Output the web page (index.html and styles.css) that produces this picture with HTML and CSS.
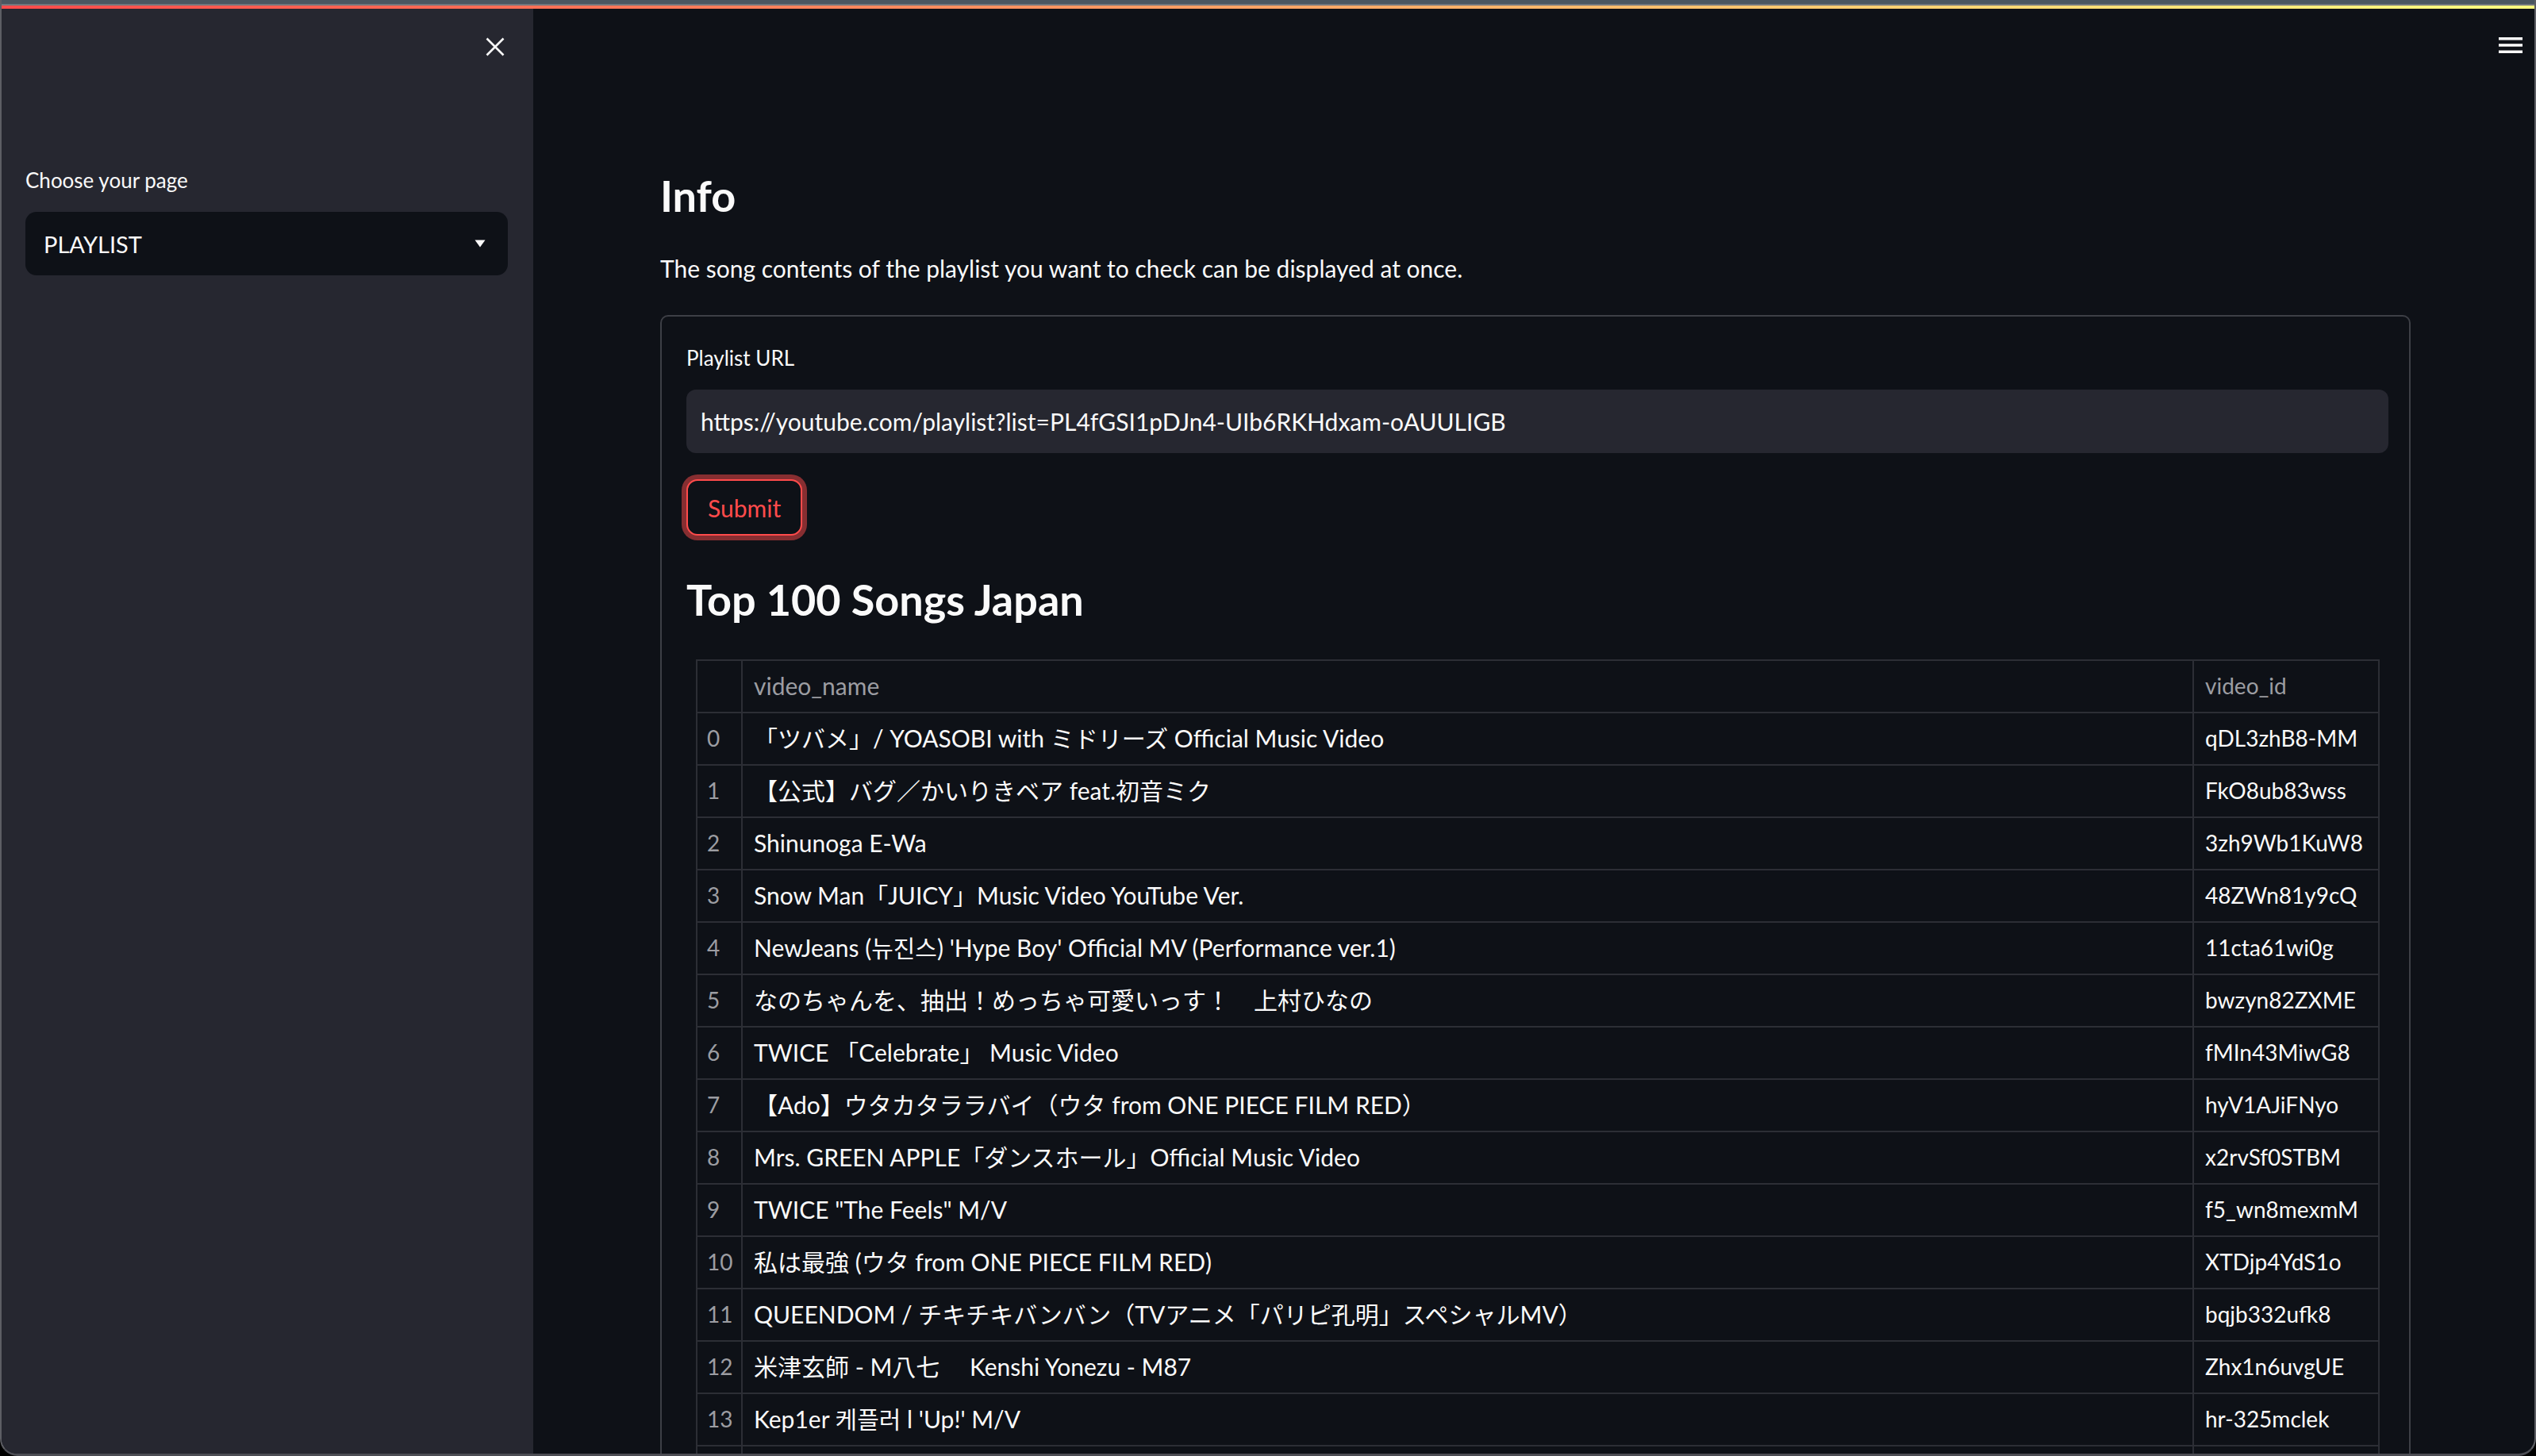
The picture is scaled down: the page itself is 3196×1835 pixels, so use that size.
FILE: index.html
```html
<!DOCTYPE html>
<html lang="en">
<head>
<meta charset="utf-8">
<title>Playlist</title>
<link rel="stylesheet" href="styles.css">
</head>
<body>
<div class="window">
  <div class="titlebar"></div>
  <div class="decoration"></div>
  <div class="app">
    <aside class="sidebar">
      <div class="sidebar-top">
        <button class="close-btn" aria-label="Close sidebar">
          <svg width="24" height="24" viewBox="0 0 24 24"><path d="M1.5 1.5 L22.5 22.5 M22.5 1.5 L1.5 22.5" stroke="#fafafa" stroke-width="2.6" fill="none"/></svg>
        </button>
      </div>
      <div class="side-label">Choose your page</div>
      <div class="select">
        <span>PLAYLIST</span>
        <svg class="caret" width="14" height="10" viewBox="0 0 14 10"><path d="M0.5 0.5 H13.5 L7 9.5 Z" fill="#fafafa"/></svg>
      </div>
    </aside>
    <main class="main">
      <div class="toolbar">
        <svg width="30" height="20" viewBox="0 0 30 20"><rect x="0" y="0" width="30" height="3.5" fill="#fafafa"/><rect x="0" y="8.2" width="30" height="3.5" fill="#fafafa"/><rect x="0" y="16.5" width="30" height="3.5" fill="#fafafa"/></svg>
      </div>
      <div class="block">
        <h3 class="title">Info</h3>
        <p class="lead">The song contents of the playlist you want to check can be displayed at once.</p>
        <div class="card">
          <div class="field-label">Playlist URL</div>
          <div class="input">https://youtube.com/playlist?list=PL4fGSI1pDJn4-UIb6RKHdxam-oAUULIGB</div>
          <button class="submit">Submit</button>
          <h3 class="title sub">Top 100 Songs Japan</h3>
          <table class="df">
            <colgroup><col class="c-idx"><col class="c-name"><col class="c-id"></colgroup>
            <thead>
              <tr><th></th><th>video_name</th><th class="id">video_id</th></tr>
            </thead>
            <tbody>
              <tr><th>0</th><td>「ツバメ」/ YOASOBI with ミドリーズ Official Music Video</td><td class="id">qDL3zhB8-MM</td></tr>
              <tr><th>1</th><td>【公式】バグ／かいりきベア feat.初音ミク</td><td class="id">FkO8ub83wss</td></tr>
              <tr><th>2</th><td>Shinunoga E-Wa</td><td class="id">3zh9Wb1KuW8</td></tr>
              <tr><th>3</th><td>Snow Man「JUICY」Music Video YouTube Ver.</td><td class="id">48ZWn81y9cQ</td></tr>
              <tr><th>4</th><td>NewJeans (뉴진스) 'Hype Boy' Official MV (Performance ver.1)</td><td class="id">11cta61wi0g</td></tr>
              <tr><th>5</th><td>なのちゃんを、抽出！めっちゃ可愛いっす！　上村ひなの</td><td class="id">bwzyn82ZXME</td></tr>
              <tr><th>6</th><td>TWICE 「Celebrate」 Music Video</td><td class="id">fMIn43MiwG8</td></tr>
              <tr><th>7</th><td>【Ado】ウタカタララバイ（ウタ from ONE PIECE FILM RED）</td><td class="id">hyV1AJiFNyo</td></tr>
              <tr><th>8</th><td>Mrs. GREEN APPLE「ダンスホール」Official Music Video</td><td class="id">x2rvSf0STBM</td></tr>
              <tr><th>9</th><td>TWICE "The Feels" M/V</td><td class="id">f5_wn8mexmM</td></tr>
              <tr><th>10</th><td>私は最強 (ウタ from ONE PIECE FILM RED)</td><td class="id">XTDjp4YdS1o</td></tr>
              <tr><th>11</th><td>QUEENDOM / チキチキバンバン（TVアニメ「パリピ孔明」スペシャルMV）</td><td class="id">bqjb332ufk8</td></tr>
              <tr><th>12</th><td>米津玄師 - M八七　 Kenshi Yonezu - M87</td><td class="id">Zhx1n6uvgUE</td></tr>
              <tr><th>13</th><td>Kep1er 케플러 l 'Up!' M/V</td><td class="id">hr-325mclek</td></tr>
              <tr><th></th><td></td><td class="id"></td></tr>
            </tbody>
          </table>
        </div>
      </div>
    </main>
  </div>
</div>
</body>
</html>
```

FILE: styles.css
```css
* { box-sizing: border-box; }

html, body {
  margin: 0;
  padding: 0;
  background: #000;
}

body {
  font-family: Lato, "Noto Sans CJK JP", "Noto Sans CJK KR", sans-serif;
  color: #fafafa;
}

.window {
  width: 3196px;
  height: 1835px;
  overflow: hidden;
  background: #0e1117;
  border-left: 2px solid #5d5e64;
  border-right: 2px solid #5d5e64;
  border-bottom: 3px solid #4c4d54;
  border-radius: 0 0 22px 22px;
  display: flex;
  flex-direction: column;
}

.titlebar {
  height: 7px;
  flex: none;
  background: #4a5660;
  border-bottom: 2px solid #72787e;
}

.decoration {
  height: 4px;
  flex: none;
  background: linear-gradient(90deg, #ff4b4b, #fffd80);
}

.app {
  flex: 1;
  display: flex;
  min-height: 0;
}

/* Sidebar */
.sidebar {
  width: 670px;
  flex: none;
  background: #262730;
  padding: 0 32px 0 30px;
}

.sidebar-top {
  display: flex;
  justify-content: flex-end;
  padding-top: 36px;
  padding-right: 4px;
}

.close-btn {
  width: 24px;
  height: 24px;
  padding: 0;
  border: 0;
  background: transparent;
  display: block;
}

.close-btn svg { display: block; }

.side-label {
  margin-top: 136px;
  font-size: 26px;
  line-height: 40px;
  color: #fafafa;
}

.select {
  margin-top: 20px;
  height: 80px;
  background: #0e1117;
  border-radius: 14px;
  padding: 0 28px 0 23px;
  display: flex;
  align-items: center;
  justify-content: space-between;
  font-size: 29px;
}

.caret { display: block; }

/* Main */
.main {
  flex: 1;
  position: relative;
  padding: 0 156px 0 160px;
  min-width: 0;
}

.toolbar {
  position: absolute;
  top: 36px;
  right: 15px;
}

.toolbar svg { display: block; }

.block {
  padding-top: 203px;
}

.title {
  margin: 0;
  font-size: 54px;
  line-height: 66px;
  font-weight: 700;
  color: #fafafa;
}

.lead {
  margin: 34px 0 0;
  font-size: 30px;
  line-height: 48px;
}

.card {
  margin-top: 35px;
  border: 2px solid #3d3f46;
  border-radius: 10px;
  padding: 32px 26px 0 31px;
  height: 1600px;
}

.field-label {
  font-size: 26px;
  line-height: 40px;
}

.input {
  margin-top: 20px;
  height: 80px;
  background: #262730;
  border-radius: 12px;
  padding: 0 18px;
  display: flex;
  align-items: center;
  font-size: 30px;
}

.submit {
  display: block;
  margin-top: 33px;
  height: 71px;
  padding: 0 25px;
  background: #0e1117;
  color: #ff4b4b;
  border: 2px solid #ff4b4b;
  border-radius: 14px;
  box-shadow: 0 0 0 6px rgba(255, 75, 75, 0.5);
  font-family: inherit;
  font-size: 30px;
}

.title.sub {
  margin-top: 48px;
}

/* Dataframe */
.df {
  margin: 42px 0 0 12px;
  width: 2122px;
  border-collapse: collapse;
  table-layout: fixed;
  font-size: 30px;
  line-height: 32px;
}

.c-idx { width: 57px; }
.c-id { width: 234px; }

.df tr {
  height: 66px;
}

.df th, .df td {
  height: 66px;
  padding: 0 14px 2px;
  border: 2px solid #2c2e35;
  text-align: left;
  font-weight: 400;
  white-space: nowrap;
  overflow: hidden;
  vertical-align: middle;
}

.df .id {
  font-size: 28px;
}

.df thead th {
  color: #9c9da2;
}

.df tbody th {
  color: #9c9da2;
  padding: 0 12px 2px;
  font-size: 28px;
}

.df td {
  color: #fafafa;
}
```
